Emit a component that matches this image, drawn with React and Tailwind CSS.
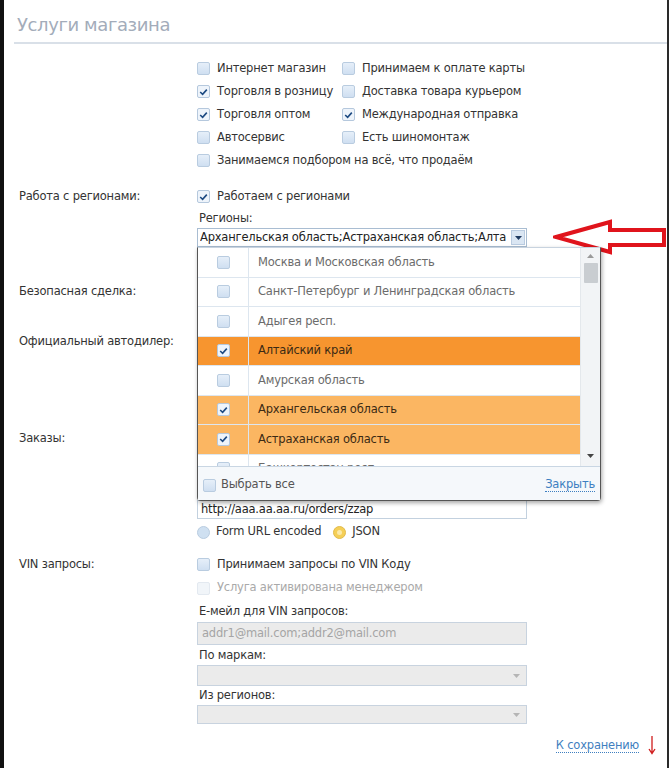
import React from 'react';

const Box = ({ checked, disabled }) => (
  <span
    className={`inline-flex w-[13px] h-[13px] shrink-0 items-center justify-center rounded-[2px] border ${
      disabled
        ? 'border-[#e3e9f0] bg-[#f1f5f9]'
        : checked
        ? 'border-[#b5c8dd] bg-[#eef4fb]'
        : 'border-[#b9cce0] bg-linear-to-b from-[#e6eff9] to-[#cfdff1]'
    }`}
  >
    {checked && (
      <svg width="9" height="8" viewBox="0 0 9 8">
        <path d="M1.2 4 L3.6 6.3 L7.8 1.6" fill="none" stroke="#1d4a82" strokeWidth="1.6" />
      </svg>
    )}
  </span>
);

const Check = ({ checked, children, className = '' }) => (
  <label className={`flex items-center gap-[7px] h-[23px] whitespace-nowrap ${className}`}>
    <Box checked={checked} />
    <span>{children}</span>
  </label>
);

const Caret = ({ color = '#333' }) => (
  <svg width="7" height="4" viewBox="0 0 7 4">
    <path d="M0 0 H7 L3.5 4 Z" fill={color} />
  </svg>
);

const regions = [
  ['Москва и Московская область', 0],
  ['Санкт-Петербург и Ленинградская область', 0],
  ['Адыгея респ.', 0],
  ['Алтайский край', 2],
  ['Амурская область', 0],
  ['Архангельская область', 1],
  ['Астраханская область', 1],
  ['Башкортостан респ.', 0],
];

const RegionsPopup = () => (
  <div className="absolute left-0 top-[19px] z-10 w-[404px] h-[254px] flex flex-col bg-white border border-[#555] border-t-[#c8d3df] rounded-b-[4px] shadow-[1px_2px_4px_rgba(0,0,0,0.35)]">
    <div className="flex h-[218px] overflow-hidden">
      <div className="flex-1 overflow-hidden">
        {regions.map(([name, mark], i) => (
          <div
            key={i}
            className={`flex h-[29.5px] shrink-0 border-b border-[#dde6ef] ${
              mark === 2 ? 'bg-[#f7952f]' : mark === 1 ? 'bg-[#fbb662]' : 'bg-white'
            }`}
          >
            <div className="w-[51px] flex items-center justify-center border-r border-[#dde6ef]">
              <Box checked={mark > 0} />
            </div>
            <div className={`flex items-center pl-[9px] ${mark ? 'text-[#3b2a14]' : 'text-[#6b6b6b]'}`}>{name}</div>
          </div>
        ))}
      </div>
      <div className="w-[20px] bg-[#f2f4f6] border-l border-[#e4e8ec] flex flex-col items-center pt-[6px]">
        <svg width="7" height="4" viewBox="0 0 7 4">
          <path d="M0 4 H7 L3.5 0 Z" fill="#9a9a9a" />
        </svg>
        <div className="mt-[5px] w-[14px] h-[20px] bg-[#c9cdd1] rounded-[1px]" />
        <div className="flex-1" />
        <div className="mb-[8px]">
          <Caret color="#444" />
        </div>
      </div>
    </div>
    <div className="flex-1 flex items-center justify-between bg-[#f5f8fb] border-t border-[#c9d6e3] px-[5px]">
      <label className="flex items-center gap-[5px] text-[#555] pt-[3px]">
        <Box />
        <span>Выбрать все</span>
      </label>
      <span className="text-[#3d7fc1] border-b border-dotted border-[#3d7fc1] leading-[14px] pt-[2px]">Закрыть</span>
    </div>
  </div>
);

const Label = ({ children, className = '' }) => (
  <div className={`w-[178px] shrink-0 text-[#333] ${className}`}>{children}</div>
);

export default function App() {
  return (
    <div className="w-[669px] h-[768px] overflow-hidden bg-white border-l-4 border-l-[#111] border-r-2 border-r-[#2a2a2a] font-['DejaVu_Sans',sans-serif] text-[11.5px] tracking-[-0.2px] text-[#333]">
      <div className="relative">
        {/* header */}
        <div className="ml-[10px] h-[44px] border-b-2 border-[#d9e0e8] pl-[3px] pt-[12px]">
          <h1 className="text-[18px] leading-[26px] text-[#a3acba] tracking-[-0.4px]">Услуги магазина</h1>
        </div>

        {/* services */}
        <div className="flex pl-[15px] mt-[13px]">
          <Label />
          <div>
            <div className="grid grid-cols-[145px_auto]">
              <Check>Интернет магазин</Check>
              <Check>Принимаем к оплате карты</Check>
              <Check checked>Торговля в розницу</Check>
              <Check>Доставка товара курьером</Check>
              <Check checked>Торговля оптом</Check>
              <Check checked>Международная отправка</Check>
              <Check>Автосервис</Check>
              <Check>Есть шиномонтаж</Check>
            </div>
            <Check>Занимаемся подбором на всё, что продаём</Check>
          </div>
        </div>

        {/* regions */}
        <div className="flex pl-[15px] mt-[13px]">
          <Label className="leading-[23px]">Работа с регионами:</Label>
          <div>
            <Check checked>Работаем с регионами</Check>
            <div className="leading-[20px] pl-[2px]">Регионы:</div>
            <div className="relative">
              <div className="w-[330px] h-[19px] flex items-center justify-between border border-[#a9bdd2] bg-white pl-[2px] pr-[1px]">
                <span className="whitespace-nowrap overflow-hidden text-[#222]">Архангельская область;Астраханская область;Алта</span>
                <span className="w-[14px] h-[15px] shrink-0 flex items-center justify-center bg-[#dae6f3] border border-[#b9cbe0]">
                  <Caret color="#1f3a60" />
                </span>
              </div>
              <RegionsPopup />
            </div>
          </div>
        </div>

        {/* rows behind the popup */}
        <div className="flex pl-[15px] mt-[35px] h-[50px]">
          <Label className="leading-[18px]">Безопасная сделка:</Label>
        </div>
        <div className="flex pl-[15px] h-[97px]">
          <Label className="leading-[18px]">Официальный автодилер:</Label>
        </div>
        <div className="flex pl-[15px]">
          <Label className="leading-[18px]">Заказы:</Label>
          <div className="pt-[71px]">
            <div className="w-[330px] h-[19px] flex items-center border border-[#c3d1df] bg-white px-[3px] text-[#222]">
              http://aaa.aa.aa.ru/orders/zzap
            </div>
            <div className="flex items-center h-[18px] mt-[4px] gap-[6px]">
              <span className="w-[13px] h-[13px] rounded-full bg-[#cfe0f1] border border-[#b9cce0]" />
              <span className="mr-[6px]">Form URL encoded</span>
              <span className="w-[13px] h-[13px] rounded-full bg-[#f5cf57] border border-[#e2bb4c] flex items-center justify-center">
                <span className="w-[5px] h-[5px] rounded-full bg-[#fbe9a8]" />
              </span>
              <span>JSON</span>
            </div>
          </div>
        </div>

        {/* VIN */}
        <div className="flex pl-[15px] mt-[12px]">
          <Label className="leading-[23px]">VIN запросы:</Label>
          <div>
            <Check>Принимаем запросы по VIN Коду</Check>
            <label className="flex items-center gap-[7px] h-[24px] text-[#a9a9a9]">
              <Box disabled />
              <span>Услуга активирована менеджером</span>
            </label>
            <div className="leading-[22px] pl-[2px]">Е-мейл для VIN запросов:</div>
            <div className="w-[330px] h-[23px] flex items-center border border-[#c8d3df] bg-[#ebebeb] px-[4px] text-[#a5a5a5]">
              addr1@mail.com;addr2@mail.com
            </div>
            <div className="leading-[19px] pl-[2px] mt-[1px]">По маркам:</div>
            <div className="w-[330px] h-[21px] flex items-center justify-end border border-[#c8d3df] bg-[#ebebeb] pr-[6px]">
              <Caret color="#b5b5b5" />
            </div>
            <div className="leading-[19px] pl-[2px]">Из регионов:</div>
            <div className="w-[330px] h-[19px] flex items-center justify-end border border-[#c8d3df] bg-[#ebebeb] pr-[6px]">
              <Caret color="#b5b5b5" />
            </div>
          </div>
        </div>

        {/* footer link */}
        <div className="flex justify-end items-center pr-[11px] mt-[11px] gap-[9px]">
          <span className="text-[#3f7fc0] leading-[14px] border-b border-dotted border-[#3f7fc0]">К сохранению</span>
          <svg width="8" height="20" viewBox="0 0 8 20">
            <path d="M4 1 V18 M1 14 L4 18.5 L7 14" fill="none" stroke="#d01c1c" strokeWidth="1.3" />
          </svg>
        </div>

        {/* red pointer arrow */}
        <svg className="absolute left-[549px] top-[219px]" width="114" height="36" viewBox="0 0 114 36">
          <path
            d="M3 18 L57 3 L57 11 L111 11 L111 26 L57 26 L57 33 Z"
            fill="white"
            stroke="#e0141c"
            strokeWidth="4"
            strokeLinejoin="miter"
          />
        </svg>
      </div>
    </div>
  );
}
